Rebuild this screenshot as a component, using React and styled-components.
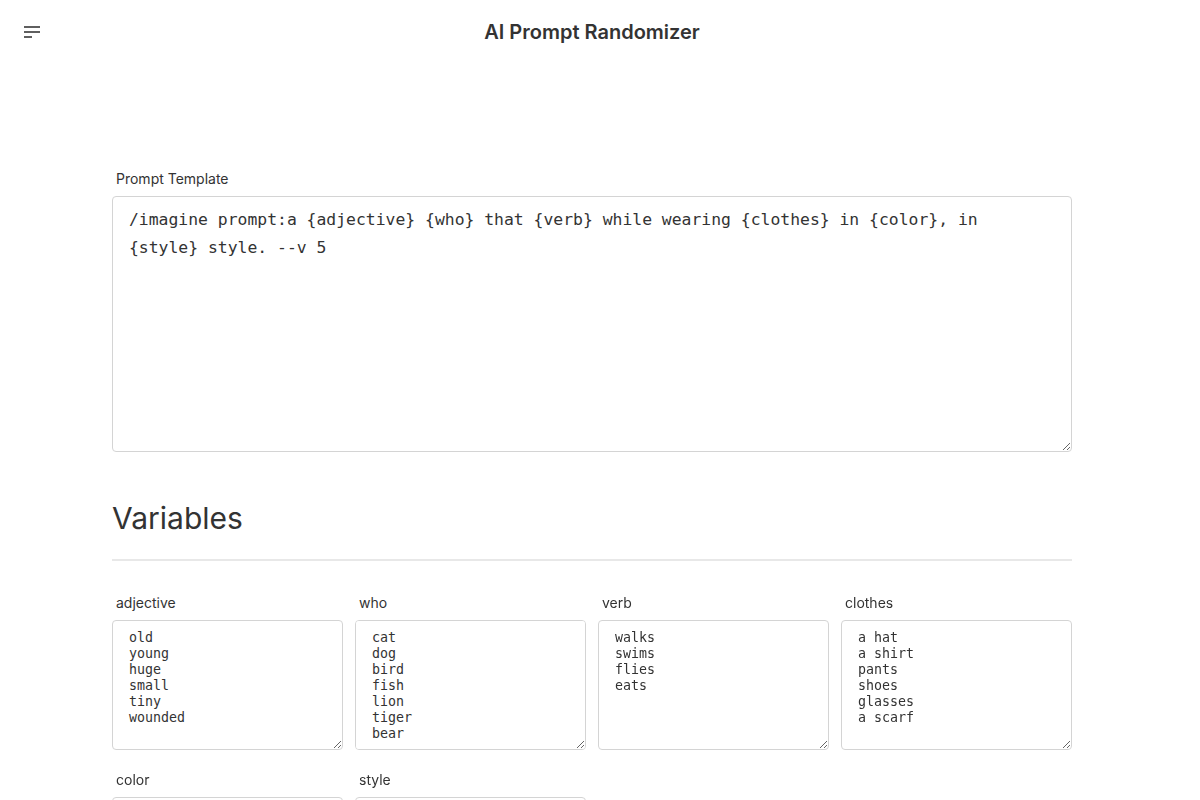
import styled, { createGlobalStyle } from 'styled-components'

const variables = [
  { name: 'adjective', values: ['old', 'young', 'huge', 'small', 'tiny', 'wounded'] },
  { name: 'who', values: ['cat', 'dog', 'bird', 'fish', 'lion', 'tiger', 'bear'] },
  { name: 'verb', values: ['walks', 'swims', 'flies', 'eats'] },
  { name: 'clothes', values: ['a hat', 'a shirt', 'pants', 'shoes', 'glasses', 'a scarf'] },
  { name: 'color', values: ['red', 'blue', 'green', 'yellow'] },
  { name: 'style', values: ['anime', 'realistic', 'pixel art'] },
]

const template =
  '/imagine prompt:a {adjective} {who} that {verb} while wearing {clothes} in {color}, in {style} style. --v 5'

const MenuIcon = () => (
  <svg width="16" height="12" viewBox="0 0 16 12" fill="none">
    <rect x="0" y="0" width="16" height="2" fill="#5f5f5f" />
    <rect x="0" y="5" width="16" height="2" fill="#5f5f5f" />
    <rect x="0" y="10" width="8" height="2" fill="#5f5f5f" />
  </svg>
)

const App = () => {
  return (
    <Page>
      <GlobalStyle />
      <Header>
        <MenuButton aria-label="menu">
          <MenuIcon />
        </MenuButton>
        <Title>AI Prompt Randomizer</Title>
      </Header>

      <Main>
        <Field>
          <Label>Prompt Template</Label>
          <TemplateArea defaultValue={template} spellCheck={false} />
        </Field>

        <SectionTitle>Variables</SectionTitle>
        <Divider />

        <VariableGrid>
          {variables.map((v) => (
            <Field key={v.name}>
              <Label>{v.name}</Label>
              <ValuesArea defaultValue={v.values.join('\n')} spellCheck={false} />
            </Field>
          ))}
        </VariableGrid>
      </Main>
    </Page>
  )
}

export default App

const GlobalStyle = createGlobalStyle`
  html, body {
    margin: 0;
    padding: 0;
    background: #fff;
  }
  body {
    font-family: Inter, "Noto Sans", sans-serif;
    color: #333;
  }
  * {
    box-sizing: border-box;
  }
`

const Page = styled.div`
  width: 1184px;
  min-height: 100vh;
`

const Header = styled.header`
  position: relative;
  display: flex;
  align-items: center;
  justify-content: center;
  height: 64px;
`

const MenuButton = styled.button`
  position: absolute;
  left: 24px;
  top: 26px;
  display: flex;
  padding: 0;
  border: none;
  background: none;
  cursor: pointer;
`

const Title = styled.h1`
  margin: 0;
  font-size: 20px;
  font-weight: 600;
  color: #333;
`

const Main = styled.main`
  width: 960px;
  margin: 0 auto;
  padding-top: 105px;
`

const Field = styled.div`
  display: flex;
  flex-direction: column;
`

const Label = styled.label`
  padding-left: 4px;
  margin-bottom: 7px;
  font-size: 14px;
  line-height: 20px;
  color: #333;
`

const TextAreaBase = styled.textarea`
  display: block;
  width: 100%;
  border: 1px solid #d4d4d4;
  border-radius: 4px;
  font-family: "DejaVu Sans Mono", monospace;
  color: #333;
  background: #fff;
  outline: none;
`

const TemplateArea = styled(TextAreaBase)`
  height: 256px;
  padding: 9px 16px;
  font-size: 16.4px;
  line-height: 28px;
`

const ValuesArea = styled(TextAreaBase)`
  height: 130px;
  padding: 9px 16px;
  font-size: 13.3px;
  line-height: 16px;
`

const SectionTitle = styled.h2`
  margin: 46px 0 0;
  font-size: 30px;
  font-weight: 400;
  line-height: 40px;
  color: #333;
`

const Divider = styled.hr`
  margin: 21px 0 32px;
  border: none;
  height: 2px;
  background: #e8e8e8;
`

const VariableGrid = styled.div`
  display: grid;
  grid-template-columns: repeat(4, 1fr);
  column-gap: 12px;
  row-gap: 20px;
`
